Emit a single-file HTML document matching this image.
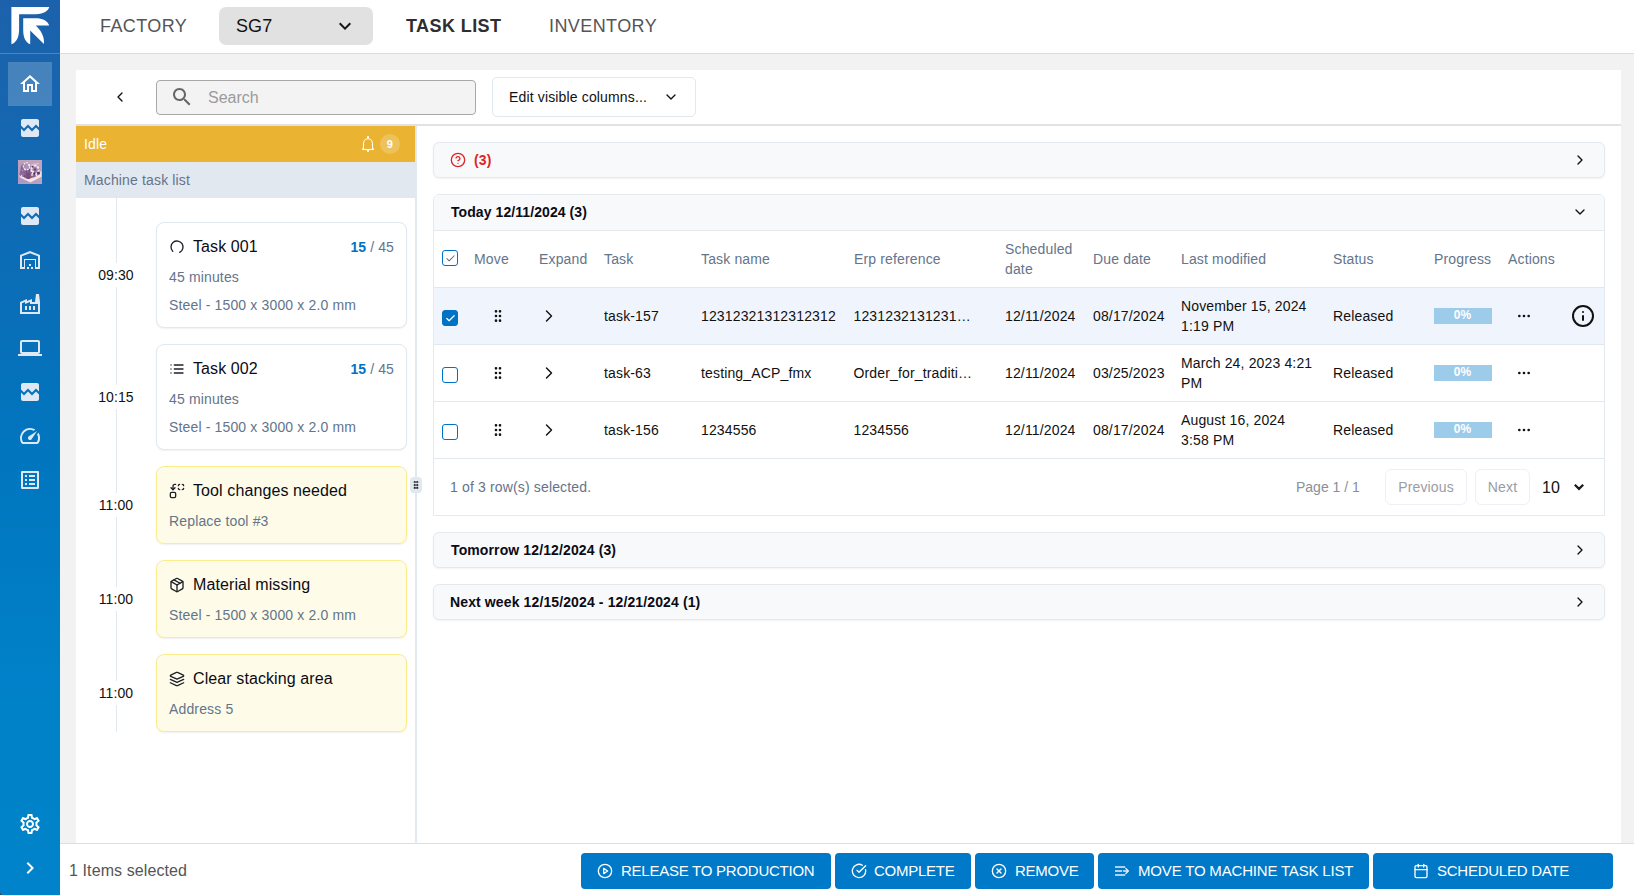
<!DOCTYPE html>
<html>
<head>
<meta charset="utf-8">
<title>Task list</title>
<style>
*{box-sizing:border-box;margin:0;padding:0}
html,body{width:1634px;height:895px;overflow:hidden;background:#f2f2f2;font-family:"Liberation Sans",sans-serif;color:#111;}
.abs{position:absolute}
svg{display:block}
/* sidebar */
#side{position:absolute;left:0;top:0;width:60px;height:895px;background:linear-gradient(180deg,rgb(28,97,171) 0%,rgb(25,100,173) 6.700%,rgb(13,108,181) 26.800%,rgb(1,117,190) 49.200%,rgb(0,130,201) 78%,rgb(0,131,202) 100%);}
#side .sep{position:absolute;left:0;top:53px;width:60px;height:1px;background:rgba(255,255,255,.22)}
#side .act{position:absolute;left:8px;top:62px;width:44px;height:44px;background:rgba(255,255,255,.2)}
.ico{position:absolute;left:18px;width:24px;height:24px;fill:#dfe9f5}
/* header */
#hdr{position:absolute;left:60px;top:0;width:1574px;height:54px;background:#fff;border-bottom:1px solid #dcdcdc}
#hdr .t{position:absolute;top:16px;font-size:18px;line-height:20px;color:#555;white-space:nowrap;letter-spacing:.42px}
#sel{position:absolute;left:159px;top:7px;width:154px;height:38px;border-radius:7px;background:#e1e1e1}
/* panel */
#panel{position:absolute;left:76px;top:70px;width:1545px;height:774px;background:#fff}
#tbline{position:absolute;left:76px;top:124px;width:1545px;height:2px;background:#e2e2e2}
#search{position:absolute;left:156px;top:80px;width:320px;height:35px;border:1px solid #a8a8a8;border-radius:4px;background:#f3f3f3}
#search span{position:absolute;left:51px;top:7px;font-size:16px;line-height:19px;color:#9b9b9b}
#editcols{position:absolute;left:492px;top:77px;width:204px;height:40px;border:1px solid #e2e8f0;border-radius:5px;background:#fff}
#editcols span{position:absolute;left:16px;top:11px;letter-spacing:.15px;font-size:14px;line-height:16px;color:#111}
/* left */
#idle{position:absolute;left:76px;top:126px;width:339px;height:36px;background:#ebb332;color:#fff}
#idle .l{position:absolute;left:8px;top:10px;letter-spacing:.15px;font-size:14px;line-height:16px}
#mtl{position:absolute;left:76px;top:162px;width:340px;height:36px;background:#e2e8f0;color:#64748b}
#mtl span{position:absolute;left:8px;top:10px;letter-spacing:.15px;font-size:14px;line-height:16px}
#vsplit{position:absolute;left:415px;top:126px;width:2px;height:718px;background:#e2e8f0}
#tl{position:absolute;left:116px;top:198px;width:1px;height:534px;background:#e2e8f0}
.time{position:absolute;left:91px;letter-spacing:.1px;width:50px;height:24px;background:#fff;font-size:14px;line-height:24px;text-align:center;color:#111}
.card{position:absolute;left:156px;width:251px;border:1px solid #e2e8f0;border-radius:8px;background:#fff;box-shadow:0 1px 2px rgba(0,0,0,.06)}
.card.y{background:#fefce8;border-color:#fdec8c}
.card .ti{position:absolute;left:36px;top:14px;letter-spacing:.1px;font-size:16px;line-height:20px;color:#0b0b14;white-space:nowrap}
.card .ic{position:absolute;left:12px;top:15.500px;color:#1c2029;width:16px;height:16px}
.card .s1,.card .s2{position:absolute;left:12px;letter-spacing:.15px;font-size:14px;line-height:16px;color:#64748b;white-space:nowrap}
.card .cnt{position:absolute;right:12px;top:16px;letter-spacing:.1px;font-size:14px;line-height:16px;color:#64748b;white-space:nowrap}
.card .cnt b{color:#0072c6}
/* right */
.sec{position:absolute;left:433px;width:1172px;height:36px;border:1px solid #e5e9f0;border-radius:6px;background:#f8f9fb;box-shadow:0 1px 2px rgba(15,23,42,.05)}
.sec .tt{position:absolute;left:17px;top:9px;letter-spacing:.12px;font-size:14px;line-height:16px;font-weight:bold;color:#0b0b14;white-space:nowrap}
.chev{position:absolute;width:16px;height:16px;margin-top:-1px}
#tbl{position:absolute;left:433px;top:194px;width:1172px;height:322px;border:1px solid #e5e9f0;border-radius:6px 6px 0 0;background:#fff;overflow:hidden}
#tbl .hd{position:absolute;left:0;top:0;width:1170px;height:36px;background:#f8f9fb;border-bottom:1px solid #e5e9f0}
.row{position:absolute;left:0;width:1170px;height:57px;border-bottom:1px solid #e2e8f0}
.row.selr{background:#f0f5fd}
.c{position:absolute;letter-spacing:.15px;font-size:14px;line-height:20px;color:#111;white-space:nowrap}
.h{position:absolute;letter-spacing:.15px;font-size:14px;line-height:20px;color:#64748b;white-space:nowrap}
.cb{position:absolute;left:8px;width:16px;height:16px;border:1px solid #0072c6;border-radius:3px;background:#fff}
.cb.on{background:#0072c6}
.pb{position:absolute;left:1000px;width:58px;height:16px;padding-right:1px;background:#9dcbea;color:#fff;font-size:12px;line-height:14px;font-weight:bold;text-align:center}
/* bottom */
#bot{position:absolute;left:60px;top:843px;width:1574px;height:52px;background:#fff;border-top:1px solid #dedede}
#bot .txt{position:absolute;left:9px;top:17px;letter-spacing:.1px;font-size:16px;line-height:20px;color:#555}
.btn{position:absolute;top:853px;height:36px;letter-spacing:-.25px;background:#0079c8;border-radius:4px;color:#fff;font-size:15px;line-height:36px;white-space:nowrap}
.btn span{position:absolute;top:0}
.btn svg{position:absolute;top:10px;width:16px;height:16px}
</style>
</head>
<body>
<div id="hdr">
  <div class="t" style="left:40px">FACTORY</div>
  <div id="sel"></div>
  <div class="t" style="left:176px;color:#111;letter-spacing:.1px">SG7</div>
  <div class="t" style="left:346px;color:#2e2e2e;font-weight:bold">TASK LIST</div>
  <div class="t" style="left:489px">INVENTORY</div>
</div>
<div id="panel"></div>
<div id="bot"><div class="txt">1 Items selected</div></div>
<div id="tbline"></div>
<div id="search"><span>Search</span></div>
<div id="editcols"><span>Edit visible columns...</span></div>

<div id="idle"><div class="l">Idle</div></div>
<div id="mtl"><span>Machine task list</span></div>
<div id="vsplit"></div>
<div id="tl"></div>
<div class="time" style="top:263px">09:30</div><div class="time" style="top:385px">10:15</div><div class="time" style="top:493px">11:00</div><div class="time" style="top:587px">11:00</div><div class="time" style="top:681px">11:00</div><div class="card" style="top:222px;height:106px"><svg class="ic" viewBox="0 0 24 24" fill="none" stroke="currentColor" stroke-width="2" stroke-linecap="round" stroke-linejoin="round"><path transform="rotate(135 12 12)" d="M21 12a9 9 0 1 1-6.219-8.560"/></svg><div class="ti">Task 001</div><div class="cnt"><b>15</b> / 45</div><div class="s1" style="top:46px">45 minutes</div><div class="s2" style="top:74px">Steel - 1500 x 3000 x 2.0 mm</div></div><div class="card" style="top:344px;height:106px"><svg class="ic" viewBox="0 0 24 24" fill="none" stroke="currentColor" stroke-width="2" stroke-linecap="round" stroke-linejoin="round"><path d="M3 12h.01"/><path d="M3 18h.01"/><path d="M3 6h.01"/><path d="M8 12h13"/><path d="M8 18h13"/><path d="M8 6h13"/></svg><div class="ti">Task 002</div><div class="cnt"><b>15</b> / 45</div><div class="s1" style="top:46px">45 minutes</div><div class="s2" style="top:74px">Steel - 1500 x 3000 x 2.0 mm</div></div><div class="card y" style="top:466px;height:78px"><svg class="ic" viewBox="0 0 24 24" fill="none" stroke="currentColor" stroke-width="2" stroke-linecap="round" stroke-linejoin="round"><path d="M14 4a2 2 0 0 1 2-2"/><path d="M16 10a2 2 0 0 1-2-2"/><path d="M20 2a2 2 0 0 1 2 2"/><path d="M22 8a2 2 0 0 1-2 2"/><path d="m3 7 3 3 3-3"/><path d="M6 10V5a3 3 0 0 1 3-3h1"/><rect x="2" y="14" width="8" height="8" rx="2"/></svg><div class="ti">Tool changes needed</div><div class="s1" style="top:46px">Replace tool #3</div></div><div class="card y" style="top:560px;height:78px"><svg class="ic" viewBox="0 0 24 24" fill="none" stroke="currentColor" stroke-width="2" stroke-linecap="round" stroke-linejoin="round"><path d="m7.500 4.270 9 5.150"/><path d="M21 8a2 2 0 0 0-1-1.730l-7-4a2 2 0 0 0-2 0l-7 4A2 2 0 0 0 3 8v8a2 2 0 0 0 1 1.730l7 4a2 2 0 0 0 2 0l7-4A2 2 0 0 0 21 16Z"/><path d="m3.300 7 8.700 5 8.700-5"/><path d="M12 22V12"/></svg><div class="ti">Material missing</div><div class="s1" style="top:46px">Steel - 1500 x 3000 x 2.0 mm</div></div><div class="card y" style="top:654px;height:78px"><svg class="ic" viewBox="0 0 24 24" fill="none" stroke="currentColor" stroke-width="2" stroke-linecap="round" stroke-linejoin="round"><path d="m12.830 2.180a2 2 0 0 0-1.660 0L2.600 6.080a1 1 0 0 0 0 1.830l8.580 3.910a2 2 0 0 0 1.660 0l8.580-3.900a1 1 0 0 0 0-1.830Z"/><path d="m22 17.650-9.170 4.160a2 2 0 0 1-1.660 0L2 17.650"/><path d="m22 12.650-9.170 4.160a2 2 0 0 1-1.660 0L2 12.650"/></svg><div class="ti">Clear stacking area</div><div class="s1" style="top:46px">Address 5</div></div><div class="abs" style="left:410px;top:477px;width:12px;height:16px;border-radius:4px;background:#e2e8f0"></div><svg class="abs" style="left:411px;top:480px;width:10px;height:10px;color:#222" viewBox="0 0 24 24" fill="none" stroke="currentColor" stroke-linecap="round" stroke-linejoin="round" stroke-width="3.400"><circle cx="9" cy="12" r="1"/><circle cx="9" cy="5" r="1"/><circle cx="9" cy="19" r="1"/><circle cx="15" cy="12" r="1"/><circle cx="15" cy="5" r="1"/><circle cx="15" cy="19" r="1"/></svg><svg class="abs" style="left:360px;top:134px;width:16px;height:20px" viewBox="0 0 16 20" fill="none" stroke="#fff" stroke-width="1.100" stroke-linejoin="round"><path d="M2.200 15.500H13.800"/><path d="M3.500 15.500V9.500C3.500 6.700 5.500 4.700 8 4.700S12.500 6.700 12.500 9.500V15.500"/><path d="M3.500 13.500L2.300 15.500M12.500 13.500L13.700 15.500" stroke-width=".9"/><path d="M8 2.200V4.500M8 15.800V17.800" stroke-width="2"/></svg><div class="abs" style="left:380px;top:134px;width:19.500px;height:20px;border-radius:10px;background:#edc25b;color:#fff;font-size:11px;font-weight:bold;line-height:20px;text-align:center">9</div><svg class="abs" style="left:112px;top:89px;width:16px;height:16px;color:#111" viewBox="0 0 24 24" fill="none" stroke="currentColor" stroke-width="2" stroke-linecap="round" stroke-linejoin="round"><path d="m15 18-6-6 6-6"/></svg><svg class="abs" style="left:170px;top:85px;width:24px;height:24px" viewBox="0 0 24 24"><path fill="#666" d="M15.500 14h-.79l-.28-.27C15.410 12.590 16 11.110 16 9.500 16 5.910 13.090 3 9.500 3S3 5.910 3 9.500 5.910 16 9.500 16c1.610 0 3.090-.59 4.230-1.570l.27.280v.79l5 4.990L20.490 19l-4.990-5zm-6 0C7.010 14 5 11.990 5 9.500S7.010 5 9.500 5 14 7.010 14 9.500 11.990 14 9.500 14z"/></svg><svg class="abs" style="left:663px;top:89px;width:16px;height:16px;color:#111" viewBox="0 0 24 24" fill="none" stroke="currentColor" stroke-width="2" stroke-linecap="round" stroke-linejoin="round"><path d="m6 9 6 6 6-6"/></svg><svg class="abs" style="left:333px;top:14px;width:24px;height:24px" viewBox="0 0 24 24"><path fill="#151515" d="M16.590 8.590L12 13.170 7.410 8.590 6 10l6 6 6-6z"/></svg>
<div class="sec" style="top:142px"><svg class="abs" style="left:16px;top:9px;width:16px;height:16px;color:#dc2626" viewBox="0 0 24 24" fill="none" stroke="currentColor" stroke-width="2" stroke-linecap="round" stroke-linejoin="round"><circle cx="12" cy="12" r="10"/><path d="M9.090 9a3 3 0 0 1 5.830 1c0 2-3 3-3 3"/><path d="M12 17h.01"/></svg><div class="tt" style="left:40px;color:#dc2626">(3)</div><svg class="chev" style="left:1138px;top:10px;color:#111" viewBox="0 0 24 24" fill="none" stroke="currentColor" stroke-width="2" stroke-linecap="round" stroke-linejoin="round"><path d="m9 18 6-6-6-6"/></svg></div><div id="tbl"><div class="hd"><div class="tt2" style="position:absolute;left:17px;top:9px;letter-spacing:.08px;font-size:14px;line-height:16px;font-weight:bold;color:#0b0b14">Today 12/11/2024 (3)</div><svg class="chev" style="left:1138px;top:10px;color:#111" viewBox="0 0 24 24" fill="none" stroke="currentColor" stroke-width="2" stroke-linecap="round" stroke-linejoin="round"><path d="m6 9 6 6 6-6"/></svg></div><div class="row" style="top:35px;height:58px"><div class="cb" style="top:20px"><svg class="abs" style="left:1.500px;top:2px;width:11px;height:11px;color:#5b667a" viewBox="0 0 24 24" fill="none" stroke="currentColor" stroke-width="2.200" stroke-linecap="round" stroke-linejoin="round"><path d="M20 6 9 17l-5-5"/></svg></div><div class="h" style="left:40px;top:19px">Move</div><div class="h" style="left:105px;top:19px">Expand</div><div class="h" style="left:170px;top:19px">Task</div><div class="h" style="left:267px;top:19px">Task name</div><div class="h" style="left:420px;top:19px">Erp reference</div><div class="h" style="left:659px;top:19px">Due date</div><div class="h" style="left:747px;top:19px">Last modified</div><div class="h" style="left:899px;top:19px">Status</div><div class="h" style="left:1000px;top:19px">Progress</div><div class="h" style="left:1074px;top:19px">Actions</div><div class="h" style="left:571px;top:9px">Scheduled<br>date</div></div><div class="row selr" style="top:93px"><div class="cb on" style="top:22px"><svg class="abs" style="left:1.500px;top:2px;width:11px;height:11px;color:#fff" viewBox="0 0 24 24" fill="none" stroke="currentColor" stroke-width="2.800" stroke-linecap="round" stroke-linejoin="round"><path d="M20 6 9 17l-5-5"/></svg></div><svg class="abs" style="left:56px;top:20px;width:16px;height:16px;color:#111" viewBox="0 0 24 24" fill="none" stroke="currentColor" stroke-width="2" stroke-linecap="round" stroke-linejoin="round"><circle cx="9" cy="12" r="1"/><circle cx="9" cy="5" r="1"/><circle cx="9" cy="19" r="1"/><circle cx="15" cy="12" r="1"/><circle cx="15" cy="5" r="1"/><circle cx="15" cy="19" r="1"/></svg><svg class="abs" style="left:105px;top:18px;width:20px;height:20px;color:#111" viewBox="0 0 24 24" fill="none" stroke="currentColor" stroke-width="1.700" stroke-linecap="round" stroke-linejoin="round"><path d="m9 18 6-6-6-6"/></svg><div class="c" style="left:170px;top:18px">task-157</div><div class="c" style="left:267px;top:18px">12312321312312312</div><div class="c" style="left:419.500px;top:18px">1231232131231&hellip;</div><div class="c" style="left:571px;top:18px">12/11/2024</div><div class="c" style="left:659px;top:18px">08/17/2024</div><div class="c" style="left:899px;top:18px">Released</div><div class="c" style="left:747px;top:8px">November 15, 2024<br>1:19 PM</div><div class="pb" style="top:20px">0%</div><svg class="abs" style="left:1082px;top:20px;width:16px;height:16px;color:#111" viewBox="0 0 24 24" fill="none" stroke="currentColor" stroke-width="2" stroke-linecap="round" stroke-linejoin="round"><circle cx="12" cy="12" r="1"/><circle cx="19" cy="12" r="1"/><circle cx="5" cy="12" r="1"/></svg><svg class="abs" style="left:1137px;top:16px;width:24px;height:24px;color:#111" viewBox="0 0 24 24" fill="none" stroke="currentColor" stroke-linecap="round" stroke-linejoin="round" stroke-width="2"><circle cx="12" cy="12" r="10"/><path d="M12 16v-4"/><path d="M12 8h.01"/></svg></div><div class="row" style="top:150px"><div class="cb" style="top:22px"></div><svg class="abs" style="left:56px;top:20px;width:16px;height:16px;color:#111" viewBox="0 0 24 24" fill="none" stroke="currentColor" stroke-width="2" stroke-linecap="round" stroke-linejoin="round"><circle cx="9" cy="12" r="1"/><circle cx="9" cy="5" r="1"/><circle cx="9" cy="19" r="1"/><circle cx="15" cy="12" r="1"/><circle cx="15" cy="5" r="1"/><circle cx="15" cy="19" r="1"/></svg><svg class="abs" style="left:105px;top:18px;width:20px;height:20px;color:#111" viewBox="0 0 24 24" fill="none" stroke="currentColor" stroke-width="1.700" stroke-linecap="round" stroke-linejoin="round"><path d="m9 18 6-6-6-6"/></svg><div class="c" style="left:170px;top:18px">task-63</div><div class="c" style="left:267px;top:18px">testing_ACP_fmx</div><div class="c" style="left:419.500px;top:18px">Order_for_traditi&hellip;</div><div class="c" style="left:571px;top:18px">12/11/2024</div><div class="c" style="left:659px;top:18px">03/25/2023</div><div class="c" style="left:899px;top:18px">Released</div><div class="c" style="left:747px;top:8px">March 24, 2023 4:21<br>PM</div><div class="pb" style="top:20px">0%</div><svg class="abs" style="left:1082px;top:20px;width:16px;height:16px;color:#111" viewBox="0 0 24 24" fill="none" stroke="currentColor" stroke-width="2" stroke-linecap="round" stroke-linejoin="round"><circle cx="12" cy="12" r="1"/><circle cx="19" cy="12" r="1"/><circle cx="5" cy="12" r="1"/></svg></div><div class="row" style="top:207px"><div class="cb" style="top:22px"></div><svg class="abs" style="left:56px;top:20px;width:16px;height:16px;color:#111" viewBox="0 0 24 24" fill="none" stroke="currentColor" stroke-width="2" stroke-linecap="round" stroke-linejoin="round"><circle cx="9" cy="12" r="1"/><circle cx="9" cy="5" r="1"/><circle cx="9" cy="19" r="1"/><circle cx="15" cy="12" r="1"/><circle cx="15" cy="5" r="1"/><circle cx="15" cy="19" r="1"/></svg><svg class="abs" style="left:105px;top:18px;width:20px;height:20px;color:#111" viewBox="0 0 24 24" fill="none" stroke="currentColor" stroke-width="1.700" stroke-linecap="round" stroke-linejoin="round"><path d="m9 18 6-6-6-6"/></svg><div class="c" style="left:170px;top:18px">task-156</div><div class="c" style="left:267px;top:18px">1234556</div><div class="c" style="left:419.500px;top:18px">1234556</div><div class="c" style="left:571px;top:18px">12/11/2024</div><div class="c" style="left:659px;top:18px">08/17/2024</div><div class="c" style="left:899px;top:18px">Released</div><div class="c" style="left:747px;top:8px">August 16, 2024<br>3:58 PM</div><div class="pb" style="top:20px">0%</div><svg class="abs" style="left:1082px;top:20px;width:16px;height:16px;color:#111" viewBox="0 0 24 24" fill="none" stroke="currentColor" stroke-width="2" stroke-linecap="round" stroke-linejoin="round"><circle cx="12" cy="12" r="1"/><circle cx="19" cy="12" r="1"/><circle cx="5" cy="12" r="1"/></svg></div><div class="h" style="left:16px;top:282px">1 of 3 row(s) selected.</div><div class="h" style="left:862px;top:282px;color:#8b8f97;letter-spacing:0">Page 1 / 1</div><div class="abs" style="left:951px;top:274px;width:82px;height:36px;border:1px solid #edf0f4;border-radius:6px;background:#fff;color:#999ca3;letter-spacing:.15px;font-size:14px;line-height:34px;text-align:center">Previous</div><div class="abs" style="left:1041px;top:274px;width:55px;height:36px;border:1px solid #edf0f4;border-radius:6px;background:#fff;color:#999ca3;letter-spacing:.15px;font-size:14px;line-height:34px;text-align:center">Next</div><div class="abs" style="left:1108px;top:283px;font-size:16px;line-height:20px;color:#111">10</div><svg class="abs" style="left:1135px;top:285px;width:20px;height:14px" viewBox="0 0 20 14" fill="none" stroke="#1a1a1a" stroke-width="2.200"><path d="M5.800 4.700L10 8.900L14.200 4.700"/></svg></div><div class="sec" style="top:532px"><div class="tt">Tomorrow 12/12/2024 (3)</div><svg class="chev" style="left:1138px;top:10px;color:#111" viewBox="0 0 24 24" fill="none" stroke="currentColor" stroke-width="2" stroke-linecap="round" stroke-linejoin="round"><path d="m9 18 6-6-6-6"/></svg></div><div class="sec" style="top:584px"><div class="tt" style="left:16px">Next week 12/15/2024 - 12/21/2024 (1)</div><svg class="chev" style="left:1138px;top:10px;color:#111" viewBox="0 0 24 24" fill="none" stroke="currentColor" stroke-width="2" stroke-linecap="round" stroke-linejoin="round"><path d="m9 18 6-6-6-6"/></svg></div><div class="btn" style="left:581px;width:250px"><svg style="left:16px" viewBox="0 0 24 24" fill="none" stroke="currentColor" stroke-width="2" stroke-linecap="round" stroke-linejoin="round"><circle cx="12" cy="12" r="10"/><polygon points="10 8 16 12 10 16 10 8"/></svg><span style="left:40px">RELEASE TO PRODUCTION</span></div><div class="btn" style="left:835px;width:136px"><svg style="left:16px" viewBox="0 0 24 24" fill="none" stroke="currentColor" stroke-width="2" stroke-linecap="round" stroke-linejoin="round"><path d="M21.801 10A10 10 0 1 1 17 3.335"/><path d="m9 11 3 3L22 4"/></svg><span style="left:39px">COMPLETE</span></div><div class="btn" style="left:975px;width:119px"><svg style="left:16px" viewBox="0 0 24 24" fill="none" stroke="currentColor" stroke-width="2" stroke-linecap="round" stroke-linejoin="round"><circle cx="12" cy="12" r="10"/><path d="m15 9-6 6"/><path d="m9 9 6 6"/></svg><span style="left:40px">REMOVE</span></div><div class="btn" style="left:1098px;width:271px"><svg style="left:15px" viewBox="0 0 16 16" fill="none" stroke="#e4f0fa" stroke-width="1.600"><path d="M2 4H12.200M2 8H9M2 12H12.200"/><path d="M10.400 8H15.200M12.800 5.500L15.400 8L12.800 10.500" stroke-width="1.300" stroke-linejoin="round" stroke-linecap="round"/></svg><span style="left:40px;letter-spacing:-.18px">MOVE TO MACHINE TASK LIST</span></div><div class="btn" style="left:1373px;width:240px"><svg style="left:40px" viewBox="0 0 24 24" fill="none" stroke="currentColor" stroke-width="2" stroke-linecap="round" stroke-linejoin="round"><path d="M8 2v4"/><path d="M16 2v4"/><rect width="18" height="18" x="3" y="4" rx="2"/><path d="M3 10h18"/></svg><span style="left:64px">SCHEDULED DATE</span></div>

<div id="side"><div class="sep"></div><div class="act"></div>
<svg class="abs" id="logo" style="left:0;top:0;width:60px;height:54px" viewBox="0 0 60 54"><path fill="#fff" d="M11.400 7H49.300C48.300 10.600 44 14.200 36 14.200H19.100V29C19.100 37 16.600 42.600 11.400 44.300Z"/><path fill="#fff" d="M23.200 18.200H36C42 18.200 47.600 20.600 49.200 25.400H35.700C40.500 29.500 45 37 43.900 44.100L30.200 30.400V44.300C25.500 42.600 23.200 37 23.200 30Z"/></svg>
<svg class="ico" style="top:72px" viewBox="0 0 24 24"><path fill="#fff" d="M12 5.69l5 4.5V18h-2v-6H9v6H7v-7.810l5-4.500M12 3L2 12h3v8h6v-6h2v6h6v-8h3L12 3z"/></svg>
<svg class="ico" style="top:116px" viewBox="0 0 24 24"><path d="M21 5v6.59l-3-3.01-4 4.01-4-4-4 4-3-3.01V5c0-1.1.9-2 2-2h14c1.1 0 2 .9 2 2zm-3 6.42l3 3.01V19c0 1.1-.9 2-2 2H5c-1.1 0-2-.9-2-2v-6.58l3 2.99 4-4 4 4 4-3.99z"/></svg>
<svg class="abs" style="left:18px;top:160px;width:24px;height:24px" viewBox="0 0 24 24"><defs><filter id="bl" x="-10%" y="-10%" width="120%" height="120%"><feGaussianBlur stdDeviation=".55"/></filter><clipPath id="cl"><rect width="24" height="24"/></clipPath><linearGradient id="bgm" x1="0" y1="1" x2="1" y2="0"><stop offset="0" stop-color="#a893c4"/><stop offset=".5" stop-color="#b9a0c0"/><stop offset="1" stop-color="#bda5c2"/></linearGradient></defs><rect width="24" height="24" fill="url(#bgm)"/><g clip-path="url(#cl)"><g filter="url(#bl)"><path d="M1 15L6 13L23.800 11.500V16.500L12.500 22.500L2 17.500Z" fill="#f4e6de"/><path d="M3 6L6 2.800L10.500 2.500L13.500 6L14 8.500L21.500 8L22.200 14L17 17L12.500 18.200L8 19L1.500 15.500L2.500 10Z" fill="#8a6290"/><rect x="8" y="9" width="4.200" height="10" fill="#75507f"/><ellipse cx="8.600" cy="6.200" rx="3.300" ry="3.600" fill="#a993b8" stroke="#f7ebe8" stroke-width="1.300" stroke-dasharray="2.200 .9"/><ellipse cx="17" cy="10" rx="3.600" ry="4.300" fill="#9b7aa6" stroke="#f8ece6" stroke-width="1.900" stroke-dasharray="2.600 .8"/><path d="M13 5.500L16 4L19.500 4.500" stroke="#e8c4c8" stroke-width="1.200" fill="none"/><circle cx="14.600" cy="6.800" r=".9" fill="#45285a"/><circle cx="16.300" cy="13.800" r="1.200" fill="#4b2e6a"/><circle cx="20.300" cy="13" r="1.300" fill="#553668"/><circle cx="17" cy="9.500" r="1" fill="#5b3a6e"/><circle cx="5.200" cy="13.200" r=".9" fill="#b86450"/><circle cx="12.800" cy="16.200" r=".9" fill="#9a5a5e"/><path d="M1.500 13.500L6 12.500V17L2 16Z" fill="#8d6eaa"/><path d="M3 16.500L9 19.500" stroke="#f3e3e0" stroke-width="1.200"/><circle cx="20" cy="3.500" r=".7" fill="#e8d0e0"/><circle cx="18" cy="3.800" r=".6" fill="#e0c6da"/><circle cx="11" cy="5" r="1" fill="#fff3ee"/><circle cx="13.500" cy="8.500" r="1.100" fill="#f6e4e0"/><circle cx="15" cy="11.500" r="1" fill="#fbeee8"/><circle cx="19.500" cy="7" r="1" fill="#f3dede"/><circle cx="21" cy="10.500" r=".9" fill="#e9cfd6"/><circle cx="7" cy="9.500" r=".9" fill="#e7d3e0"/><circle cx="4.500" cy="10.500" r="1" fill="#a688b8"/><circle cx="10" cy="12" r=".8" fill="#9b7fb6"/><circle cx="14" cy="15" r=".9" fill="#f1dcd8"/><circle cx="18.500" cy="15.500" r=".8" fill="#f6e6e0"/><circle cx="6.500" cy="16" r=".8" fill="#5f4284"/><circle cx="3.500" cy="15.800" r=".7" fill="#f2e2e6"/></g></g><rect x=".25" y=".25" width="23.500" height="23.500" fill="none" stroke="#cda4b6" stroke-width=".5" opacity=".8"/></svg>
<svg class="ico" style="top:204px" viewBox="0 0 24 24"><path d="M21 5v6.59l-3-3.01-4 4.01-4-4-4 4-3-3.01V5c0-1.1.9-2 2-2h14c1.1 0 2 .9 2 2zm-3 6.42l3 3.01V19c0 1.1-.9 2-2 2H5c-1.1 0-2-.9-2-2v-6.58l3 2.99 4-4 4 4 4-3.99z"/></svg>
<svg class="ico" style="top:248px" viewBox="0 0 24 24"><path d="M20 8.350V19h-2v-8H6v8H4V8.350l8-3.200 8 3.200zM22 21V7L12 3 2 7v14h5v-9h10v9h5zm-11-2H9v2h2v-2zm2-3h-2v2h2v-2zm2 3h-2v2h2v-2z"/></svg>
<svg class="ico" style="top:292px" viewBox="0 0 24 24"><path d="M22 22H2V10l7-3v2l5-2v3h3l1-8h3l1 8V22zM12 9.950l-5 2V10l-3 1.320V20h16v-8h-8V9.950zM11 18h2v-4h-2V18zM7 18h2v-4H7V18zM17 14h-2v4h2V14z"/></svg>
<svg class="ico" style="top:336px" viewBox="0 0 24 24"><path d="M20 18c1.100 0 2-.9 2-2V6c0-1.100-.9-2-2-2H4c-1.100 0-2 .9-2 2v10c0 1.100.9 2 2 2H0v2h24v-2h-4zM4 6h16v10H4V6z"/></svg>
<svg class="ico" style="top:380px" viewBox="0 0 24 24"><path d="M21 5v6.59l-3-3.01-4 4.01-4-4-4 4-3-3.01V5c0-1.1.9-2 2-2h14c1.1 0 2 .9 2 2zm-3 6.42l3 3.01V19c0 1.1-.9 2-2 2H5c-1.1 0-2-.9-2-2v-6.58l3 2.99 4-4 4 4 4-3.99z"/></svg>
<svg class="ico" style="top:424px" viewBox="0 0 24 24"><path d="M20.380 8.570l-1.230 1.850a8 8 0 0 1-.22 7.580H5.070A8 8 0 0 1 15.580 6.850l1.850-1.230A10 10 0 0 0 3.350 19a2 2 0 0 0 1.720 1h13.850a2 2 0 0 0 1.740-1 10 10 0 0 0-.27-10.440zm-9.790 6.840a2 2 0 0 0 2.830 0l5.660-8.490-8.490 5.660a2 2 0 0 0 0 2.830z"/></svg>
<svg class="ico" style="top:468px" viewBox="0 0 24 24"><path d="M11 7h6v2h-6zm0 4h6v2h-6zm0 4h6v2h-6zM7 7h2v2H7zm0 4h2v2H7zm0 4h2v2H7zM20.100 3H3.900c-.5 0-.9.4-.9.900v16.200c0 .4.4.9.900.9h16.200c.4 0 .9-.5.900-.9V3.900c0-.5-.5-.9-.9-.9zM19 19H5V5h14v14z"/></svg>
<svg class="ico" style="top:812px" viewBox="0 0 24 24"><path fill="#fff" d="M19.430 12.980c.04-.32.07-.64.07-.98 0-.34-.03-.66-.07-.98l2.110-1.650c.19-.15.24-.42.120-.64l-2-3.460c-.09-.16-.26-.25-.44-.25-.06 0-.12.010-.17.030l-2.490 1c-.52-.4-1.080-.73-1.690-.98l-.38-2.650C14.460 2.180 14.250 2 14 2h-4c-.25 0-.46.180-.49.420l-.38 2.650c-.61.250-1.170.59-1.690.98l-2.490-1c-.06-.02-.12-.03-.18-.03-.17 0-.34.090-.43.250l-2 3.460c-.13.220-.07.49.120.64l2.110 1.650c-.04.320-.07.650-.07.980 0 .33.030.66.070.98l-2.110 1.650c-.19.150-.24.420-.12.640l2 3.460c.09.160.26.250.44.250.06 0 .12-.01.170-.03l2.490-1c.52.4 1.080.73 1.690.98l.38 2.650c.03.240.24.420.49.420h4c.25 0 .46-.18.49-.42l.38-2.650c.61-.25 1.170-.59 1.690-.98l2.490 1c.06.020.12.030.18.030.17 0 .34-.09.43-.25l2-3.460c.12-.22.07-.49-.12-.64l-2.110-1.650zm-1.980-1.710c.04.310.05.520.05.730 0 .21-.02.430-.05.730l-.14 1.130.89.700 1.080.84-.7 1.210-1.270-.51-1.040-.42-.9.680c-.43.320-.84.560-1.250.73l-1.060.43-.16 1.130-.2 1.350h-1.400l-.19-1.350-.16-1.130-1.060-.43c-.43-.18-.83-.41-1.230-.71l-.91-.7-1.060.43-1.270.51-.7-1.210 1.080-.84.89-.7-.14-1.130c-.03-.31-.05-.54-.05-.74s.02-.43.050-.73l.14-1.130-.89-.7-1.080-.84.700-1.210 1.270.51 1.040.42.900-.68c.43-.32.840-.56 1.250-.73l1.060-.43.160-1.130.2-1.350h1.390l.19 1.350.16 1.130 1.060.43c.43.180.83.410 1.230.71l.91.700 1.060-.43 1.270-.51.700 1.210-1.070.85-.89.700.14 1.130zM12 8c-2.210 0-4 1.790-4 4s1.790 4 4 4 4-1.790 4-4-1.790-4-4-4zm0 6c-1.100 0-2-.9-2-2s.9-2 2-2 2 .9 2 2-.9 2-2 2z"/></svg>
<svg class="ico" style="top:856px" viewBox="0 0 24 24"><path fill="#fff" d="M10 6L8.590 7.410 13.170 12l-4.580 4.590L10 18l6-6z"/></svg>
</div>
<svg class="abs" style="left:0;top:892px;width:3px;height:3px" viewBox="0 0 3 3"><path d="M0 0V3H3A3 3 0 0 1 0 0Z" fill="#4a3024"/></svg>
</body>
</html>
